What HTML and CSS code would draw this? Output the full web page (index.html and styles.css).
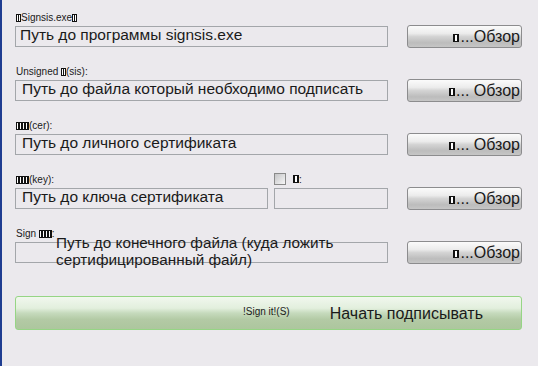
FILE: index.html
```html
<!DOCTYPE html>
<html lang="ru">
<head>
    <meta charset="UTF-8">
    <title>Signsis</title>
    <link rel="stylesheet" href="styles.css">
</head>
<body>
    <div class="form">
        <div class="row">
            <div class="label"><span class="tofu"></span>Signsis.exe<span class="tofu"></span></div>
            <div class="line">
                <div class="field">Путь до программы signsis.exe</div>
                <button class="browse"><span class="tofu bold"></span>...Обзор</button>
            </div>
        </div>

        <div class="row">
            <div class="label">Unsigned <span class="tofu"></span>(sis):</div>
            <div class="line">
                <div class="field indent">Путь до файла который необходимо подписать</div>
                <button class="browse"><span class="tofu bold"></span>... Обзор</button>
            </div>
        </div>

        <div class="row">
            <div class="label"><span class="tofu wide"></span>(cer):</div>
            <div class="line">
                <div class="field indent">Путь до личного сертификата</div>
                <button class="browse"><span class="tofu bold"></span>... Обзор</button>
            </div>
        </div>

        <div class="row">
            <div class="label split">
                <span class="label-main"><span class="tofu wide"></span>(key):</span>
                <span class="checkbox"></span>
                <span class="check-label"><span class="tofu bold"></span>:</span>
            </div>
            <div class="line">
                <div class="fields">
                    <div class="field indent key">Путь до ключа сертификата</div>
                    <div class="field pass"></div>
                </div>
                <button class="browse"><span class="tofu bold"></span>... Обзор</button>
            </div>
        </div>

        <div class="row">
            <div class="label">Sign <span class="tofu wide"></span>:</div>
            <div class="line">
                <div class="field out">
                    <span class="hint">Путь до конечного файла (куда ложить<br>сертифицированный файл)</span>
                </div>
                <button class="browse"><span class="tofu bold"></span>...Обзор</button>
            </div>
        </div>

        <button class="sign">
            <span class="sign-key">!Sign it!(S)</span>
            <span class="sign-text">Начать подписывать</span>
        </button>
    </div>
</body>
</html>
```

FILE: styles.css
```css
html, body {
    margin: 0;
    height: 100%;
}
body {
    background: #ebe9ed;
    border-left: 2px solid #1f3d91;
    box-sizing: border-box;
    font-family: "Liberation Sans", Arial, sans-serif;
    color: #1a1a1a;
    overflow: hidden;
}
.form {
    padding: 11px 0 0 13px;
}
.row {
    margin-bottom: 17px;
}
.label {
    height: 14px;
    line-height: 14px;
    font-size: 10px;
    padding-left: 1px;
}
.label.split {
    display: flex;
    align-items: center;
}
.label-main {
    width: 258px;
}
.checkbox {
    width: 10px;
    height: 10px;
    border: 1px solid #8a8a8a;
    background: linear-gradient(135deg, #c4c4c6 0%, #f6f6f7 100%);
    margin-top: -3px;
}
.check-label {
    margin-left: 7px;
}
.tofu {
    display: inline-block;
    width: 3px;
    height: 6px;
    border: 1px solid #111;
    background: linear-gradient(90deg, #fff 0 1px, #111 1px 2px, #fff 2px);
    vertical-align: -1px;
}
.tofu.wide {
    width: 11px;
    background: repeating-linear-gradient(90deg, #fff 0 1px, #111 1px 3px);
}
.tofu.bold {
    width: 4px;
    height: 6px;
    background: linear-gradient(90deg, #111 0 1px, #fff 1px 3px, #111 3px);
    vertical-align: 0;
}
.line {
    display: flex;
    align-items: center;
    gap: 19px;
    height: 23px;
}
.fields {
    display: flex;
    gap: 6px;
}
.field {
    position: relative;
    width: 373px;
    height: 21px;
    box-sizing: border-box;
    border: 1px solid #a3a6aa;
    padding-left: 4px;
    font-size: 15.5px;
    line-height: 15px;
    white-space: nowrap;
}
.field.indent {
    padding-left: 6px;
}
.field.key {
    width: 253px;
}
.field.pass {
    width: 114px;
}
.hint {
    position: absolute;
    left: 40px;
    top: -9px;
    font-size: 15.3px;
    line-height: 17px;
}
.browse {
    width: 115px;
    height: 23px;
    box-sizing: border-box;
    border: 1px solid #8c8c8e;
    border-radius: 3px;
    background: linear-gradient(180deg, #fbfbfb 0%, #ececec 35%, #d4d4d4 50%, #bcbcbc 80%, #c6c6c6 100%);
    font-family: "Liberation Sans", Arial, sans-serif;
    font-size: 16px;
    color: #1a1a1a;
    text-align: right;
    padding: 0 1px 0 0;
    line-height: 19px;
}
.browse .tofu {
    margin-right: 1px;
}
.sign {
    display: flex;
    align-items: center;
    width: 507px;
    height: 34px;
    margin-top: 32px;
    box-sizing: border-box;
    border: 1px solid #96d585;
    border-radius: 3px;
    background: linear-gradient(180deg, #f1f7ee 0%, #e2efdd 35%, #c6dabd 50%, #b3caa5 70%, #adc69e 100%);
    padding: 0 0 0 227px;
    font-family: "Liberation Sans", Arial, sans-serif;
    color: #1a1a1a;
}
.sign-key {
    font-size: 10px;
    margin-top: -3px;
}
.sign-text {
    font-size: 16px;
    margin-left: 40px;
    margin-top: 1px;
}
```
